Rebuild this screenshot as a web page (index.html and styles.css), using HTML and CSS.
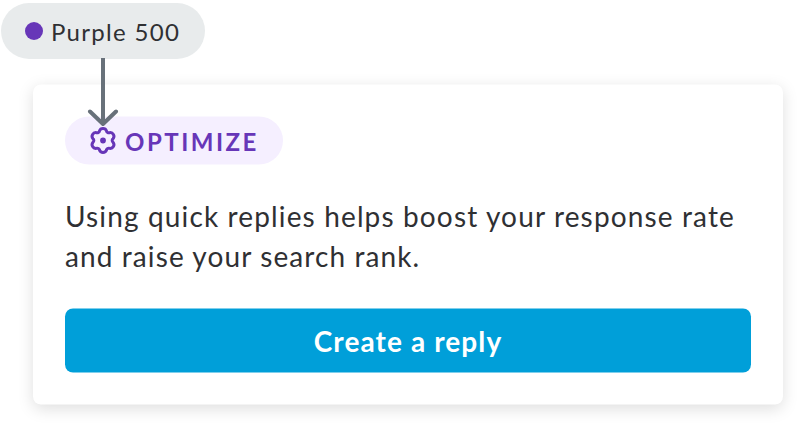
FILE: index.html
```html
<!DOCTYPE html>
<html lang="en">
<head>
<meta charset="utf-8">
<title>Optimize card</title>
<link rel="stylesheet" href="styles.css">
</head>
<body>
<main class="card">
  <div class="badge">
    <svg class="gear" viewBox="-13.1 -13.1 26.2 26.2" aria-hidden="true">
      <path d="M-3.3-8.9A3.5 3.5 0 0 1 3.3-8.9A2 2 0 0 0 6.06-7.31A3.5 3.5 0 0 1 9.36-1.59A2 2 0 0 0 9.36 1.59A3.5 3.5 0 0 1 6.06 7.31A2 2 0 0 0 3.3 8.9A3.5 3.5 0 0 1-3.3 8.9A2 2 0 0 0-6.06 7.31A3.5 3.5 0 0 1-9.36 1.59A2 2 0 0 0-9.36-1.59A3.5 3.5 0 0 1-6.06-7.31A2 2 0 0 0-3.3-8.9Z" fill="none" stroke="currentColor" stroke-width="2.8" stroke-linejoin="round"/>
      <circle r="2.7" fill="currentColor"/>
    </svg>
    <span class="badge-text">OPTIMIZE</span>
  </div>
  <p class="message"><span class="line first">Using quick replies helps boost your response rate</span> <span class="line second">and raise your search rank.</span></p>
  <button class="action" type="button">Create a reply</button>
</main>
<div class="callout">
  <span class="dot"></span>
  <span class="callout-text">Purple 500</span>
</div>
<svg class="arrow" viewBox="0 0 32 70" aria-hidden="true">
  <path d="M16 0V66M3 53.5L16 66L29 53.5" fill="none" stroke="#68717a" stroke-width="4" stroke-linecap="round" stroke-linejoin="round"/>
</svg>
</body>
</html>
```
FILE: styles.css
```css
* { box-sizing: border-box; }
body {
  position: relative;
  height: 423px;
  margin: 0;
  padding: 84px 14px 0 33px;
  overflow: hidden;
  background: #fff;
  color: #2f3033;
  font-family: Lato, "Open Sans", sans-serif;
}
.card {
  height: 320px;
  padding: 32px;
  border-radius: 8px;
  background: #fff;
  box-shadow: 0 4px 16px rgba(0, 0, 0, 0.13);
  transform: translateY(0.5px);
}
.badge {
  display: flex;
  align-items: center;
  width: 218px;
  height: 48px;
  padding-left: 24px;
  border-radius: 24px;
  background: #f5efff;
  color: #6736b8;
}
.gear {
  width: 28px;
  height: 28px;
}
.badge-text {
  margin: 1px 0 0 8px;
  font-size: 24px;
  font-weight: 700;
  line-height: 32px;
  letter-spacing: 2.5px;
}
.message {
  margin: 31px 0 33px;
  font-size: 28px;
  line-height: 40px;
  white-space: nowrap;
}
.line { display: block; }
.first { letter-spacing: 1.14px; }
.second { letter-spacing: 1.1px; }
.action {
  display: block;
  width: 100%;
  height: 64px;
  padding: 0;
  border: 0;
  border-radius: 8px;
  background: #009fd9;
  color: #fff;
  font: 700 28px/40px Lato, "Open Sans", sans-serif;
  letter-spacing: 1.1px;
}
.callout {
  position: absolute;
  top: 2.5px;
  left: 1px;
  display: flex;
  align-items: center;
  width: 204px;
  height: 56px;
  padding-left: 24px;
  border-radius: 28px;
  background: #e8ebec;
}
.dot {
  width: 18px;
  height: 18px;
  border-radius: 50%;
  background: #6736b8;
}
.callout-text {
  margin: 3px 0 0 8px;
  font-size: 24px;
  line-height: 32px;
  letter-spacing: 1.3px;
  white-space: nowrap;
}
.arrow {
  position: absolute;
  top: 58px;
  left: 87px;
  width: 32px;
  height: 70px;
}
```
